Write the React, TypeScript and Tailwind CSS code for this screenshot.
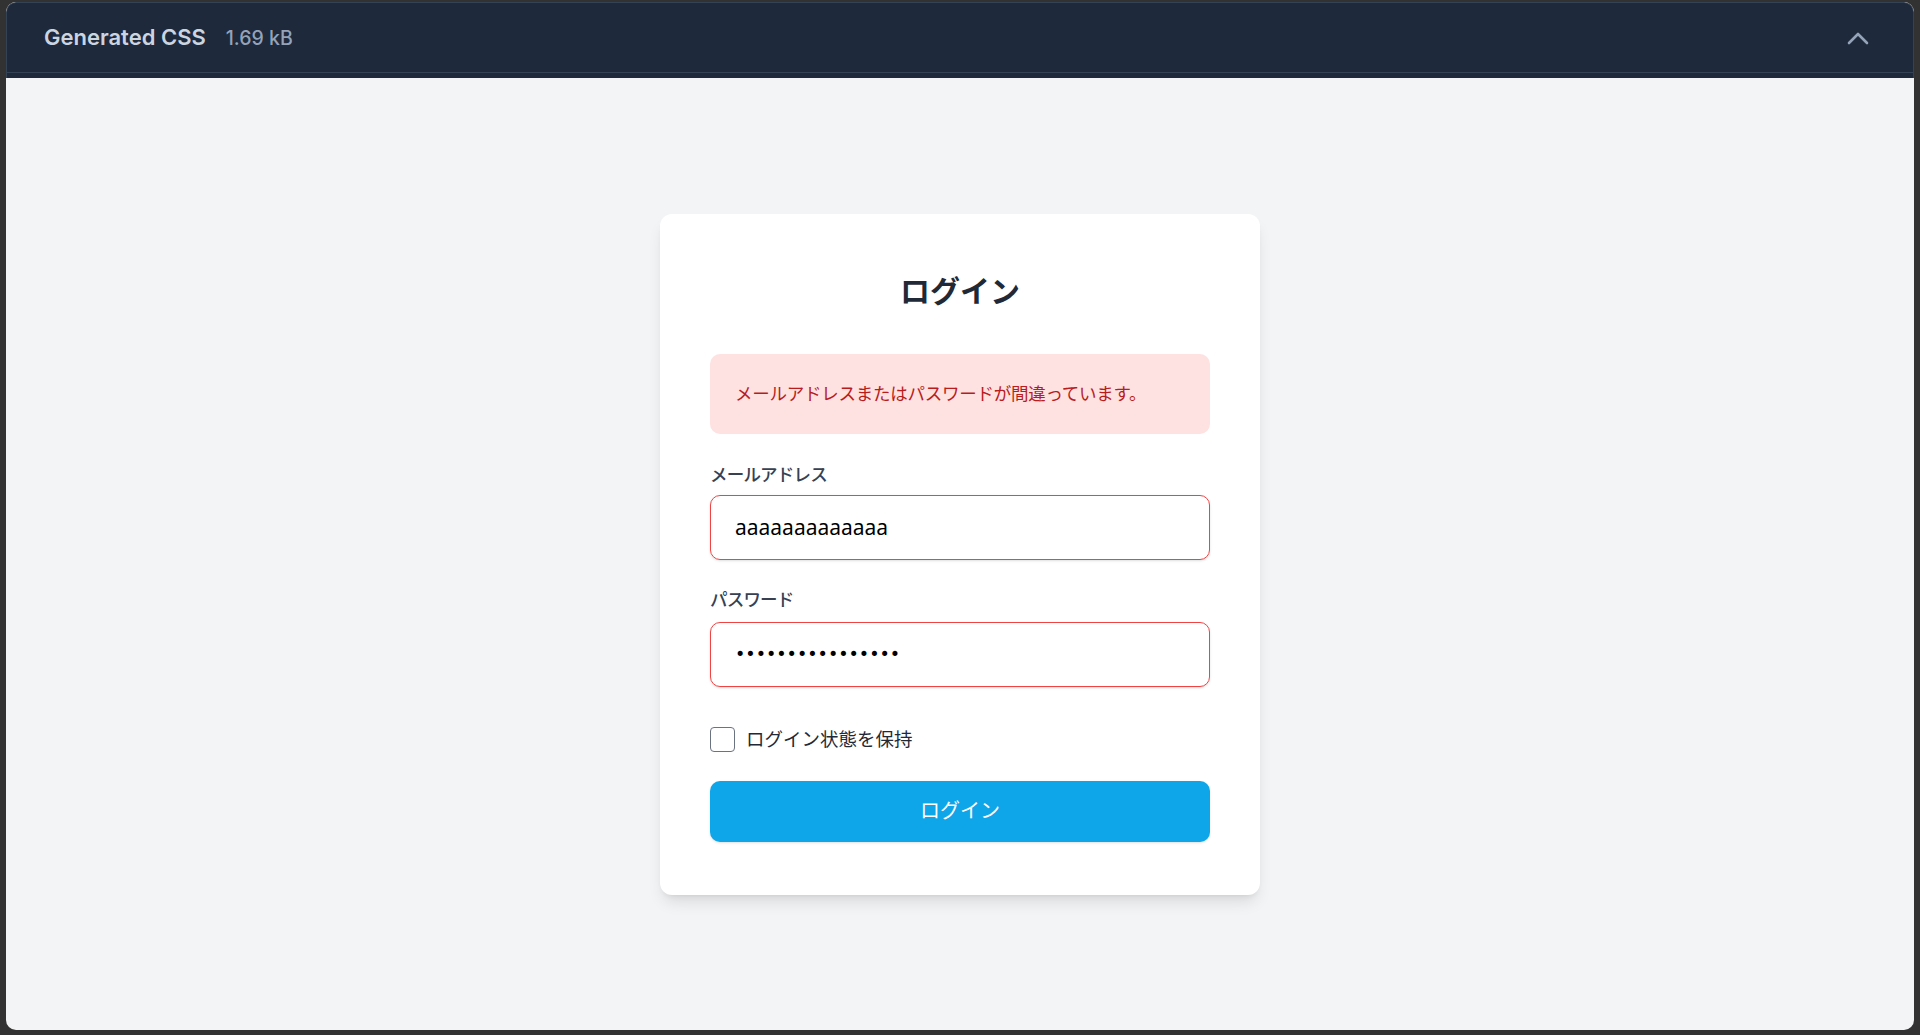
import React, { useState } from 'react';

const jp = '"Noto Sans", "Noto Sans CJK JP", sans-serif';

function ChevronUpIcon() {
  return (
    <svg width="22" height="14" viewBox="0 0 22 14" fill="none">
      <path d="M2 12 L11 3 L20 12" stroke="#94a3b8" strokeWidth="2.6" strokeLinecap="round" strokeLinejoin="round" />
    </svg>
  );
}

export default function App() {
  const [email, setEmail] = useState('aaaaaaaaaaaaa');
  const [password, setPassword] = useState('aaaaaaaaaaaaaaaa');
  const [remember, setRemember] = useState(false);

  return (
    <div className="h-screen w-full bg-[#323232] pt-[2px] pl-[6px] pr-[6px] pb-[5px] flex">
      <div className="flex-1 flex flex-col rounded-[10px] overflow-hidden bg-[#f3f4f6]">
        {/* Preview header */}
        <div className="bg-[#1e293b] flex flex-col rounded-t-[10px] border-t border-x border-[#344256]">
          <div className="h-[70px] flex items-center justify-between pl-[37px] pr-[44px] border-b border-[#344256]" style={{ fontFamily: 'Inter, sans-serif' }}>
            <div className="flex items-baseline gap-[20px]">
              <span className="text-[22px] font-semibold text-[#cbd5e1]">Generated CSS</span>
              <span className="text-[19.5px] font-medium text-[#94a3b8]">1.69 kB</span>
            </div>
            <ChevronUpIcon />
          </div>
          <div className="h-[5px]" />
        </div>

        {/* Preview body */}
        <main className="flex-1 flex items-center justify-center" style={{ fontFamily: jp }}>
          <div className="w-[600px] bg-white rounded-[12px] shadow-lg px-[50px] pt-[52px] pb-[53px]">
            <h1 className="text-[30px] leading-[50px] font-bold text-center text-[#1f2937] mb-[38px]">ログイン</h1>

            <div className="h-[80px] flex items-center px-[25px] rounded-[10px] bg-[#fee2e2] text-[#b91c1c] text-[17.5px] mb-[28px] tracking-[-0.25px]">
              メールアドレスまたはパスワードが間違っています。
            </div>

            <label className="block text-[17.5px] leading-[25px] font-medium text-[#374151] mb-[8px] tracking-[-0.8px]">メールアドレス</label>
            <input
              type="email"
              value={email}
              onChange={(e) => setEmail(e.target.value)}
              className="block w-full h-[65px] px-[24px] rounded-[10px] border border-[#ef4444] shadow-sm text-[21px] text-black outline-none mb-[27px]"
            />

            <label className="block text-[17.5px] leading-[25px] font-medium text-[#374151] mb-[10px] tracking-[-0.8px]">パスワード</label>
            <input
              type="password"
              value={password}
              onChange={(e) => setPassword(e.target.value)}
              style={{ fontFamily: '"DejaVu Sans", sans-serif' }}
              className="block w-full h-[65px] px-[24px] rounded-[10px] border border-[#ef4444] shadow-sm text-[17.5px] text-black outline-none mb-[40px]"
            />

            <label className="flex items-center h-[25px] mb-[29px]">
              <input
                type="checkbox"
                checked={remember}
                onChange={(e) => setRemember(e.target.checked)}
                className="appearance-none w-[25px] h-[25px] rounded-[4px] border-[1.5px] border-[#6b7280] bg-white"
              />
              <span className="ml-[11px] text-[18.5px] text-[#1f2937]">ログイン状態を保持</span>
            </label>

            <button className="w-full h-[61px] rounded-[10px] bg-[#0ea5e9] text-white text-[20px] font-normal shadow-sm">
              ログイン
            </button>
          </div>
        </main>
      </div>
    </div>
  );
}
